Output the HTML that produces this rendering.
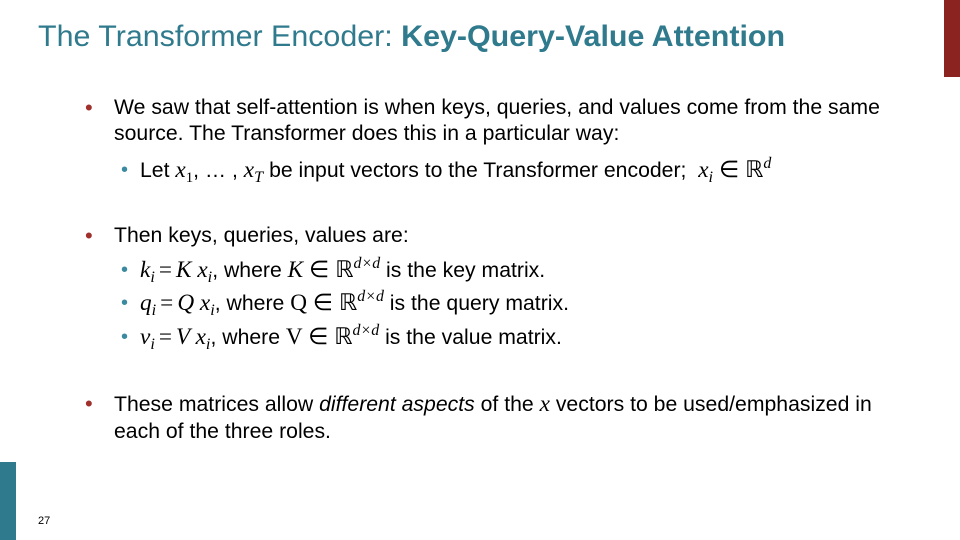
<!DOCTYPE html>
<html><head><meta charset="utf-8"><style>
body{margin:0;width:960px;height:540px;background:#fff;position:relative;overflow:hidden;font-family:"Liberation Sans",sans-serif;color:#000}
.l{position:absolute;white-space:nowrap;font-size:21px;line-height:24px;transform:scaleX(1.01);transform-origin:left center}
.m{font-family:"Liberation Serif",serif;font-style:italic;font-size:23px}
.r{font-family:"Liberation Serif",serif;font-size:23px}
.b1{position:absolute;color:#a0302c;font-size:22px;line-height:24px}
.b2{position:absolute;color:#3b8aa0;font-size:20px;line-height:24px}
.sb{font-size:0.7em;position:relative;top:5px}
.sp{font-size:0.75em;position:relative;top:-9px}
.eq{margin:0 4px}
</style></head><body>
<div style="position:absolute;left:944px;top:0;width:16px;height:77px;background:#8b2420"></div>
<div style="position:absolute;left:0;top:462px;width:16px;height:78px;background:#2f7a8c"></div>
<div style="position:absolute;left:38px;top:20px;font-size:30px;color:#2f7a8c;white-space:nowrap;transform:scaleX(1.013);transform-origin:left">The Transformer Encoder: <b>Key-Query-Value Attention</b></div>
<div class="b1" style="left:85px;top:96px">•</div>
<div class="l" style="left:114px;top:96px">We saw that self-attention is when keys, queries, and values come from the same</div>
<div class="l" style="left:114px;top:122px">source. The Transformer does this in a particular way:</div>
<div class="b2" style="left:121px;top:158px">•</div>
<div class="l" style="left:140px;top:158px">Let <span class="m">x</span><span class="r sb">1</span>, … , <span class="m">x<span class="sb">T</span></span> be input vectors to the Transformer encoder;&nbsp; <span class="m">x<span class="sb">i</span></span> <span class="r">∈ ℝ</span><span class="m sp">d</span></div>
<div class="b1" style="left:85px;top:224px">•</div>
<div class="l" style="left:114px;top:224px">Then keys, queries, values are:</div>
<div class="b2" style="left:121px;top:258px">•</div>
<div class="l" style="left:140px;top:258px"><span class="m">k<span class="sb">i</span></span><span class="r eq">=</span><span class="m">K x<span class="sb">i</span></span>, where <span class="m">K</span> <span class="r">∈ ℝ</span><span class="m sp">d×d</span> is the key matrix.</div>
<div class="b2" style="left:121px;top:291px">•</div>
<div class="l" style="left:140px;top:291px"><span class="m">q<span class="sb">i</span></span><span class="r eq">=</span><span class="m">Q x<span class="sb">i</span></span>, where <span class="r">Q ∈ ℝ</span><span class="m sp">d×d</span> is the query matrix.</div>
<div class="b2" style="left:121px;top:325px">•</div>
<div class="l" style="left:140px;top:325px"><span class="m">v<span class="sb">i</span></span><span class="r eq">=</span><span class="m">V x<span class="sb">i</span></span>, where <span class="r">V ∈ ℝ</span><span class="m sp">d×d</span> is the value matrix.</div>
<div class="b1" style="left:85px;top:392px">•</div>
<div class="l" style="left:114px;top:392px">These matrices allow <i>different aspects</i> of the <span class="m">x</span> vectors to be used/emphasized in</div>
<div class="l" style="left:114px;top:420px">each of the three roles.</div>
<div style="position:absolute;left:38px;top:515px;font-size:11px">27</div>
</body></html>
